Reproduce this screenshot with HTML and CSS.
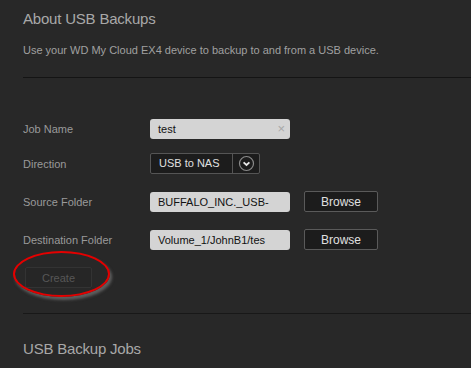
FILE: index.html
```html
<!DOCTYPE html>
<html lang="en">
<head>
    <meta charset="UTF-8">
    <link rel="stylesheet" href="styles.css">
    <title>USB Backups</title>
</head>
<body>
    <section class="about">
        <h2>About USB Backups</h2>
        <p class="desc">Use your WD My Cloud EX4 device to backup to and from a USB device.</p>
    </section>

    <section class="form">
        <div class="row row-first">
            <label>Job Name</label>
            <div class="input">test<span class="clear">&#215;</span></div>
        </div>
        <div class="row">
            <label>Direction</label>
            <div class="select">
                <span class="select-value">USB to NAS</span>
                <span class="select-btn">
                    <svg width="17" height="17" viewBox="0 0 17 17">
                        <circle cx="8.5" cy="8.5" r="7" fill="#1c1c1c" stroke="#8a8a8a" stroke-width="1.2"/>
                        <path d="M5.6 7.3 L8.5 10 L11.4 7.3" fill="none" stroke="#e8e8e8" stroke-width="1.8"/>
                    </svg>
                </span>
            </div>
        </div>
        <div class="row">
            <label>Source Folder</label>
            <div class="input">BUFFALO_INC._USB-</div>
            <button class="browse">Browse</button>
        </div>
        <div class="row">
            <label>Destination Folder</label>
            <div class="input">Volume_1/JohnB1/tes</div>
            <button class="browse">Browse</button>
        </div>
        <div class="create-wrap">
            <button class="create">Create</button>
            <div class="circle"></div>
        </div>
    </section>

    <section class="jobs">
        <h2>USB Backup Jobs</h2>
    </section>
</body>
</html>
```

FILE: styles.css
```css
body {
    margin: 0;
    padding: 0;
    background-color: #282828;
    color: #a0a0a0;
    font-family: 'Liberation Sans', Arial, sans-serif;
    overflow: hidden;
}

h2 {
    font-size: 15px;
    font-weight: normal;
    color: #a8a8a8;
    margin: 0;
    letter-spacing: -0.2px;
}

.about {
    margin-left: 23px;
    padding-top: 10px;
    height: 67px;
    border-bottom: 1px solid #141414;
}

.about h2 {
    line-height: 18px;
}

.desc {
    font-size: 11px;
    margin: 15px 0 0;
    line-height: 14px;
}

.form {
    margin-left: 23px;
    padding-top: 40px;
    height: 195px;
    border-bottom: 1px solid #181818;
}

.row {
    display: flex;
    align-items: center;
    height: 21px;
    margin-bottom: 17px;
}

.row-first {
    margin-bottom: 14px;
}

.row label {
    width: 127px;
    font-size: 11px;
    color: #9a9a9a;
}

.input {
    position: relative;
    width: 132px;
    height: 20px;
    line-height: 20px;
    padding-left: 8px;
    background-color: #d4d4d4;
    border-radius: 3px;
    color: #111;
    font-size: 11px;
}

.clear {
    position: absolute;
    right: 5px;
    top: 0;
    color: #a8a8a8;
    font-size: 13px;
}

.select {
    display: flex;
    height: 19px;
    border: 1px solid #555;
    border-radius: 2px;
    background-color: #1c1c1c;
}

.select-value {
    width: 73px;
    padding-left: 8px;
    line-height: 19px;
    font-size: 11px;
    color: #e0e0e0;
    border-right: 1px solid #555;
}

.select-btn {
    width: 26px;
    display: flex;
    align-items: center;
    justify-content: center;
}

.browse {
    margin-left: 14px;
    width: 74px;
    height: 21px;
    background-color: #1c1c1c;
    border: 1px solid #5a5a5a;
    border-radius: 2px;
    color: #e0e0e0;
    font-family: 'Liberation Sans', Arial, sans-serif;
    font-size: 12px;
    padding: 0;
}

.create-wrap {
    position: relative;
    margin-top: 1px;
}

.create {
    margin-left: 2px;
    width: 67px;
    height: 21px;
    background-color: #262626;
    border: 1px solid #333;
    border-radius: 2px;
    color: #575757;
    font-family: 'Liberation Sans', Arial, sans-serif;
    font-size: 11px;
    padding: 0;
}

.circle {
    position: absolute;
    left: -10px;
    top: -16px;
    width: 93px;
    height: 42px;
    border: 2px solid #e40000;
    border-radius: 50%;
    box-shadow: 2px 3px 3px rgba(150, 150, 150, 0.5);
}

.jobs {
    margin-left: 23px;
    padding-top: 26px;
}
```
